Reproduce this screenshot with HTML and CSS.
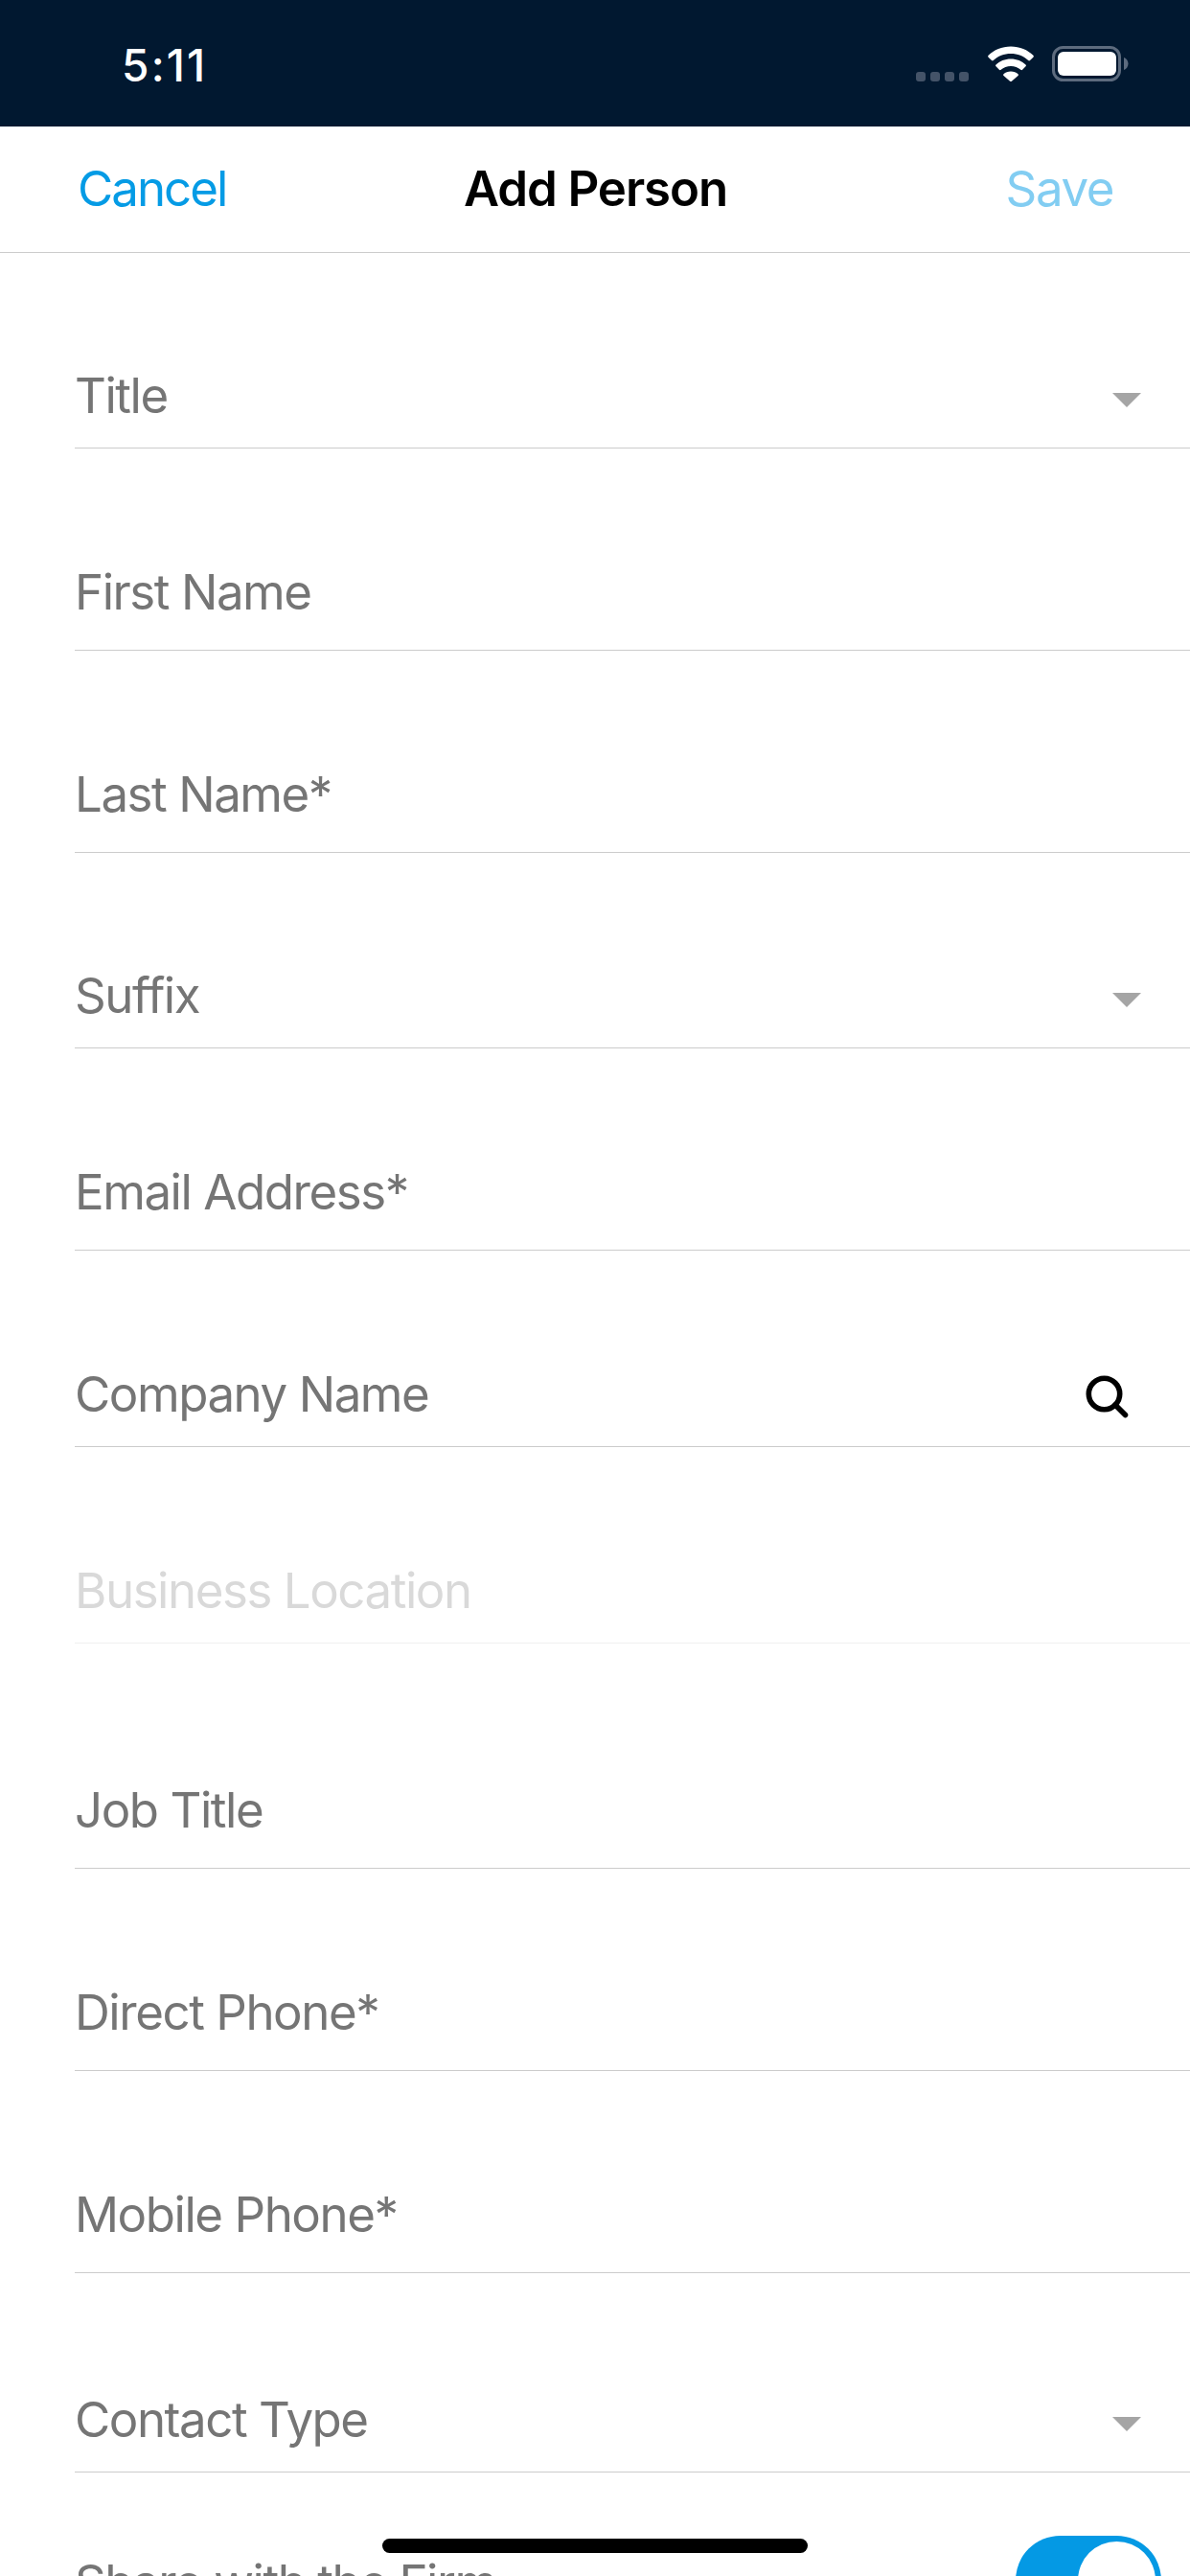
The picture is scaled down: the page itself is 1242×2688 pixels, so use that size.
FILE: index.html
```html
<!DOCTYPE html>
<html lang="en">
<head>
<meta charset="utf-8">
<title>Add Person</title>
<link rel="stylesheet" href="styles.css">
</head>
<body>
<div class="screen">
  <header class="status">
    <span class="time">5:11</span>
    <div class="status-icons">
      <div class="signal"><i></i><i></i><i></i><i></i></div>
      <svg class="wifi" viewBox="0 0 48 37" aria-hidden="true">
        <path d="M24 0.5C14.6 0.5 6.4 4 0.6 9.8c-.6.6-.6 1.3 0 1.900l3.400 3.400c.6.6 1.200.6 1.800 0C10.500 10.500 17 8 24 8s13.500 2.500 18.200 7.100c.6.6 1.200.6 1.800 0l3.400-3.400c.6-.6.6-1.300 0-1.900C41.600 4 33.400 0.500 24 0.500z" fill="#fff"/>
        <path d="M24 13.500c-6.200 0-11.600 2.300-15.500 6-.6.6-.6 1.200 0 1.800l3.400 3.400c.6.6 1.100.6 1.800.1 2.800-2.300 6.300-3.700 10.300-3.700s7.500 1.400 10.300 3.700c.7.5 1.200.5 1.800-.1l3.400-3.400c.6-.6.6-1.200 0-1.800-3.900-3.700-9.300-6-15.500-6z" fill="#fff"/>
        <path d="M24 26.500c-3 0-5.600 1-7.500 2.700-.6.500-.6 1.100 0 1.700l6.300 5.500c.8.700 1.600.700 2.400 0l6.300-5.500c.6-.6.6-1.200 0-1.700-1.900-1.700-4.500-2.700-7.500-2.700z" fill="#fff"/>
      </svg>
      <svg class="battery" viewBox="0 0 80 38" aria-hidden="true">
        <rect x="1.500" y="1.500" width="69" height="34" rx="10" fill="none" stroke="#5d6b7e" stroke-width="3"/>
        <rect x="6" y="6" width="61" height="25" rx="6" fill="#fff"/>
        <path d="M75 12c2.800 1 4.500 3.800 4.500 6.500s-1.700 5.500-4.500 6.500z" fill="#5d6b7e"/>
      </svg>
    </div>
  </header>

  <nav class="navbar">
    <span class="nav-action cancel">Cancel</span>
    <span class="nav-title">Add Person</span>
    <span class="nav-action save">Save</span>
  </nav>

  <form class="form">
    <div class="row short h204"><span class="label">Title</span><span class="caret"></span></div>
    <div class="row h211"><span class="label">First Name</span></div>
    <div class="row h211"><span class="label">Last Name*</span></div>
    <div class="row short h204"><span class="label">Suffix</span><span class="caret"></span></div>
    <div class="row h211"><span class="label">Email Address*</span></div>
    <div class="row short h205"><span class="label">Company Name</span>
      <svg class="search" viewBox="0 0 46 46" aria-hidden="true">
        <circle cx="19.500" cy="19.500" r="16.200" fill="none" stroke="#000" stroke-width="5.600"/>
        <path d="M31 31L41.500 41.500" fill="none" stroke="#000" stroke-width="5.600" stroke-linecap="round"/>
      </svg>
    </div>
    <div class="row short h205 disabled"><span class="label">Business Location</span></div>
    <div class="row h235"><span class="label">Job Title</span></div>
    <div class="row h211"><span class="label">Direct Phone*</span></div>
    <div class="row h211"><span class="label">Mobile Phone*</span></div>
    <div class="row short h208"><span class="label">Contact Type</span><span class="caret"></span></div>
    <div class="toggle-row">
      <span class="label">Share with the Firm</span>
      <span class="toggle"><span class="knob"></span></span>
    </div>
  </form>

  <div class="home-indicator"></div>
</div>
</body>
</html>
```
FILE: styles.css
```css
* { box-sizing: border-box; }
html, body { margin: 0; padding: 0; background: #fff; }
body { font-family: Inter, "Liberation Sans", sans-serif; }

.screen {
  position: relative;
  width: 1242px;
  height: 2688px;
  overflow: hidden;
  background: #fff;
}

.status {
  height: 132px;
  background: #011830;
  display: flex;
  justify-content: space-between;
  align-items: flex-end;
  padding: 0 64px 47px 127px;
}
.time {
  color: #fff;
  font-size: 46px;
  line-height: 46px;
  font-weight: 500;
  margin-bottom: -6px;
  letter-spacing: 2.2px;
}
.status-icons { display: flex; align-items: flex-end; }
.signal { display: flex; gap: 5px; margin-right: 20px; }
.signal i { display: block; width: 10px; height: 10px; border-radius: 3px; background: #445368; }
.wifi { display: block; width: 48px; height: 37px; margin-right: 19px; }
.battery { display: block; width: 80px; height: 38px; margin-bottom: -1px; }

.navbar {
  height: 132px;
  border-bottom: 1px solid #ccc;
  display: grid;
  grid-template-columns: 1fr auto 1fr;
  align-items: center;
  padding: 0 80px 2px 81px;
  font-size: 51px;
  letter-spacing: -1.1px;
}
.nav-action { font-weight: 400; }
.cancel { color: #059be5; justify-self: start; letter-spacing: -2px; }
.save { color: #82cdf2; justify-self: end; letter-spacing: -1.4px; }
.nav-title { color: #000; font-weight: 600; }

.form { margin-left: 78px; }

.row {
  display: flex;
  align-items: flex-end;
  justify-content: space-between;
  border-bottom: 1px solid #ccc;
  padding-bottom: 29px;
}
.short { padding-bottom: 23px; }
.h204 { height: 204px; }
.h205 { height: 205px; }
.h208 { height: 208px; }
.h211 { height: 211px; }
.h235 { height: 235px; }

.label {
  font-size: 51px;
  line-height: 62px;
  color: #757575;
  letter-spacing: -1.45px;
}
.disabled { border-bottom-color: #f0f0f0; }
.disabled .label { color: #d9d9d9; }

.caret {
  width: 0;
  height: 0;
  margin: 0 51px 19px 0;
  border-left: 15px solid transparent;
  border-right: 15px solid transparent;
  border-top: 15px solid #a5a5a5;
}
.search {
  display: block;
  width: 46px;
  height: 46px;
  margin: 0 63px 5px 0;
}

.toggle-row {
  display: flex;
  justify-content: space-between;
  align-items: flex-start;
  padding-top: 66px;
  padding-right: 30px;
  height: 200px;
}
.toggle-row .label { margin-top: 18px; }
.toggle {
  display: block;
  width: 152px;
  height: 93px;
  border-radius: 47px;
  background: #0499e4;
  position: relative;
}
.knob {
  position: absolute;
  top: 6px;
  right: 6px;
  width: 81px;
  height: 81px;
  border-radius: 50%;
  background: #fff;
}

.home-indicator {
  position: absolute;
  left: 399px;
  top: 2649px;
  width: 444px;
  height: 15px;
  border-radius: 8px;
  background: #000;
}
```
